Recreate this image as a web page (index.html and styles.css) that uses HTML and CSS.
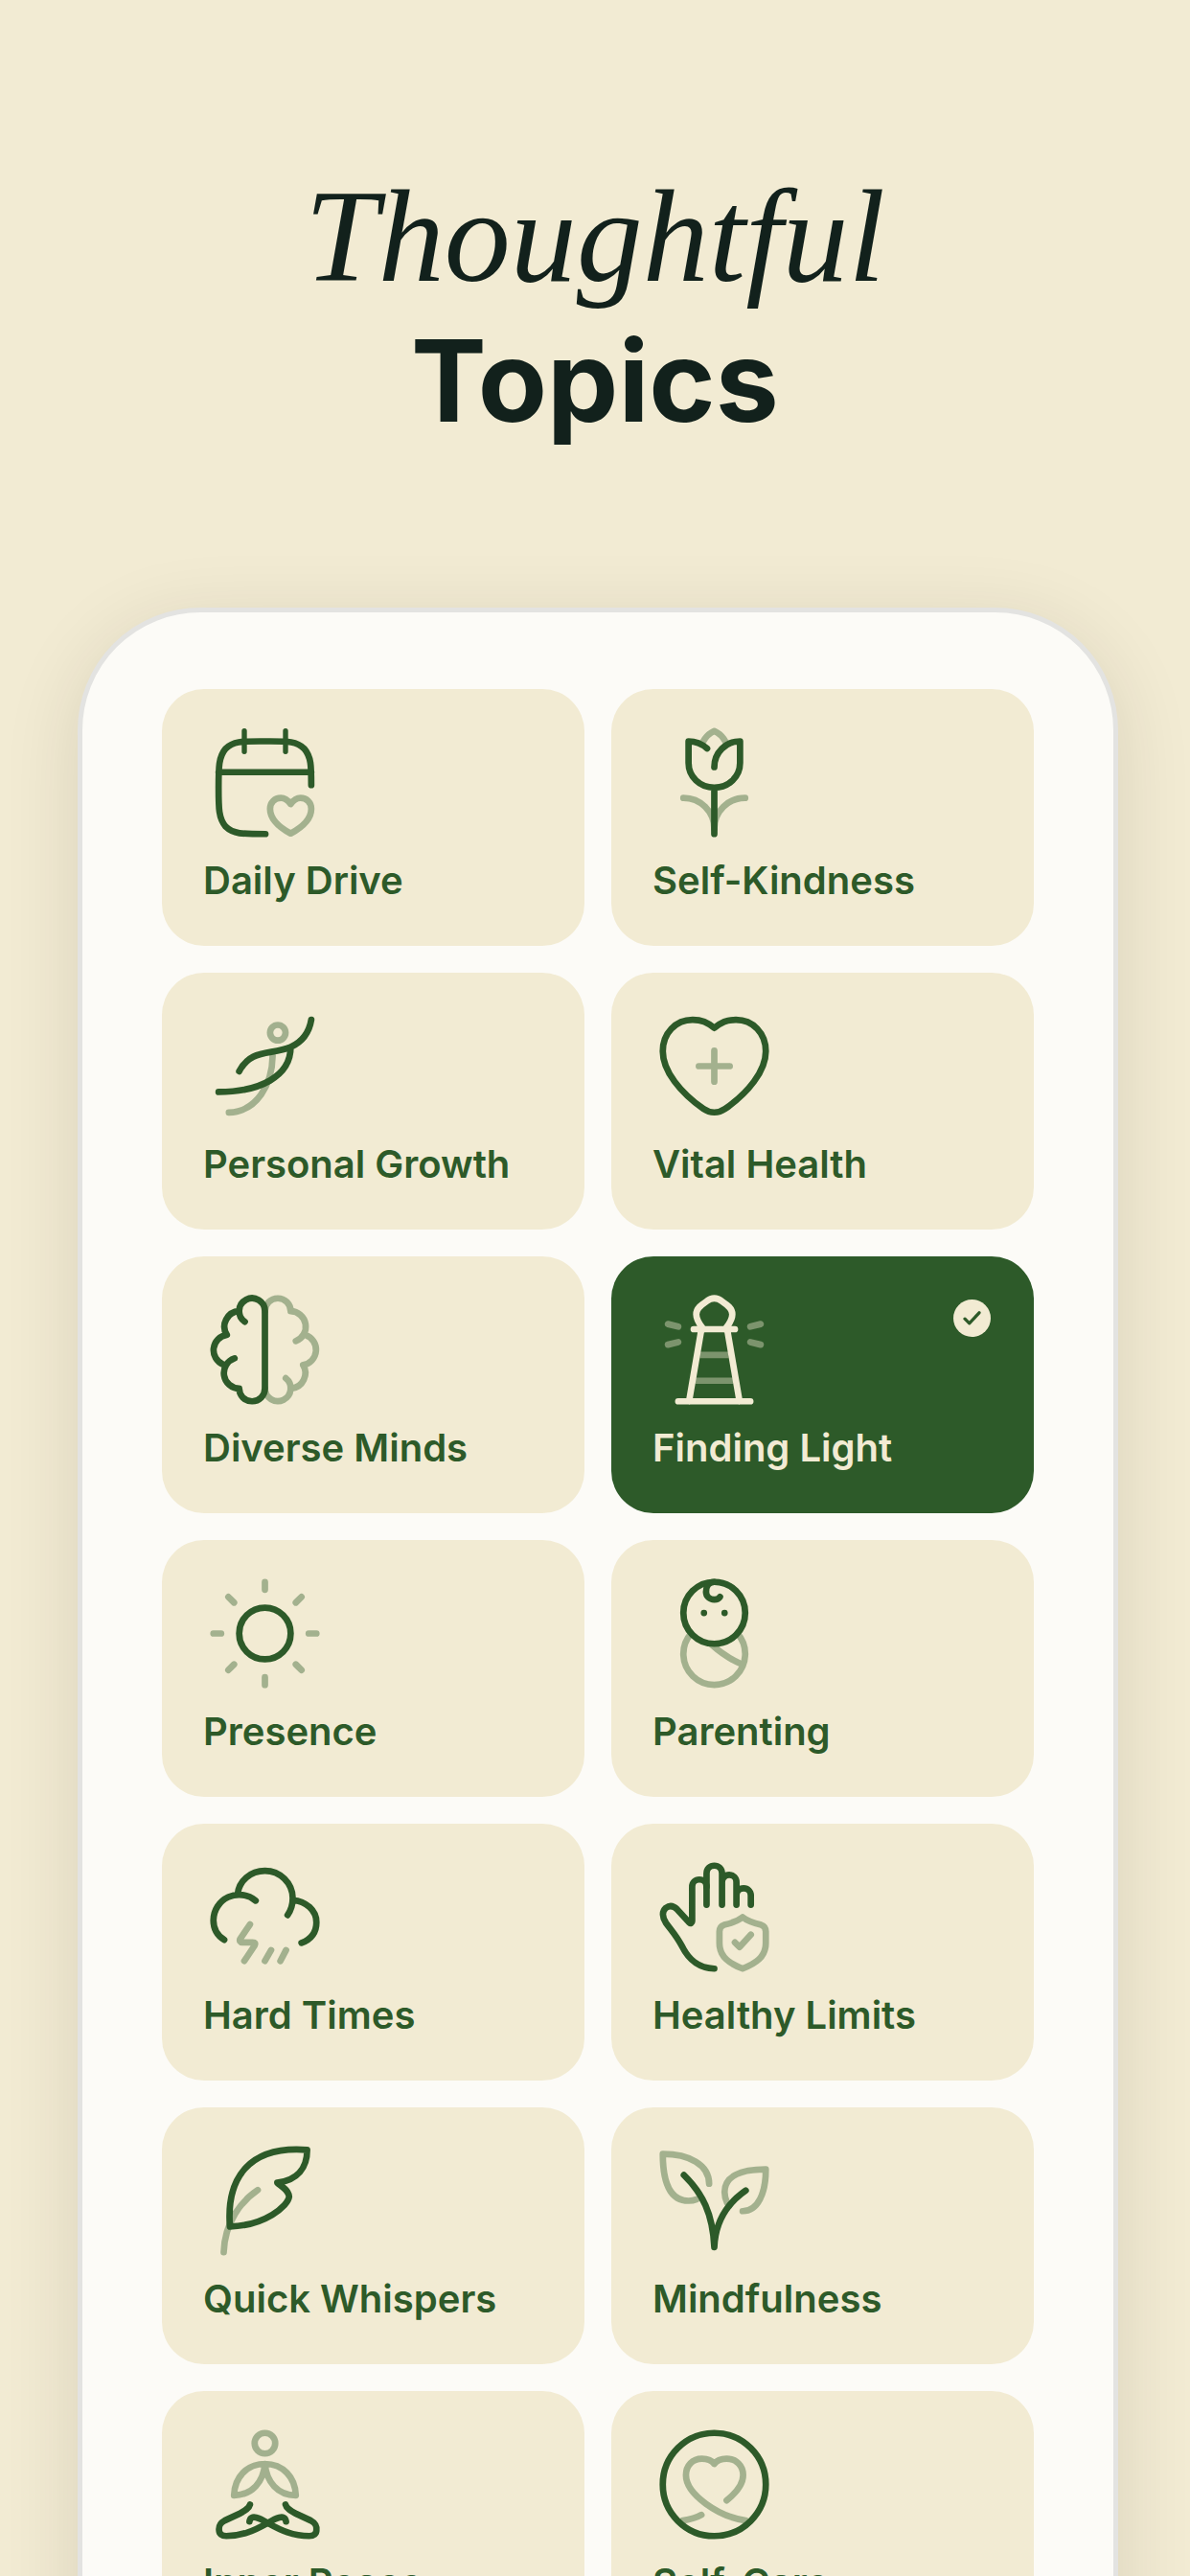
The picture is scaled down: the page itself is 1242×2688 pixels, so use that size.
FILE: index.html
```html
<!DOCTYPE html>
<html lang="en">
<head>
    <meta charset="UTF-8">
    <meta name="viewport" content="width=device-width, initial-scale=1.0">
    <title>Thoughtful Topics</title>
    <link rel="stylesheet" href="styles.css">
</head>
<body>
    <header class="header">
        <h1><em>Thoughtful</em> <strong>Topics</strong></h1>
    </header>

    <main class="panel">
        <button type="button" class="card" aria-pressed="false">
            <svg class="icon" viewBox="0 0 24 24" aria-hidden="true">
                <path d="M12.1 22C7.5 22 5.8 22 4.4 20.6C3 19 3 17 3 13S3 7 4.4 5.4C5.8 4 7.5 4 11 4H13C16.5 4 18.2 4 19.6 5.4C21 7 21 8.8 21 12.5M3 10H21"/>
                <path class="thin" d="M8 2V6M16 2V6"/>
                <path class="soft" d="M17 16.2C16.5 15.5 15.9 15 15.1 15C13.9 15 13 15.9 13 17.1C13 19 14.8 20.7 17 21.9C19.2 20.7 21 19 21 17.1C21 15.9 20.1 15 18.9 15C18.1 15 17.5 15.5 17 16.2Z"/>
            </svg>
            <span class="label">Daily Drive</span>
        </button>

        <button type="button" class="card" aria-pressed="false">
            <svg class="icon" viewBox="0 0 24 24" aria-hidden="true">
                <path class="soft" d="M9.8 4.1C10.3 3.2 11.1 2.4 12 2C12.9 2.4 13.7 3.2 14.2 4.1M6 15C9.3 15 12 17.6 12 21C12 17.6 14.7 15 18 15"/>
                <path d="M10.6 5.4C9.7 4.6 8.5 4 7 4V8.2C7 10.9 9.2 13 12 13S17 10.9 17 8.2V4C14.2 4 12 6.2 12 9M12 13V22"/>
            </svg>
            <span class="label">Self-Kindness</span>
        </button>

        <button type="button" class="card" aria-pressed="false">
            <svg class="icon" viewBox="0 0 24 24" aria-hidden="true">
                <g class="soft">
                    <circle cx="14.5" cy="5.5" r="1.5"/>
                    <path d="M13.5 10C13.4 15.5 10.5 20.8 5 21"/>
                </g>
                <path d="M7 13C9.3 8.6 13 9.9 17 8.3C19.2 7.3 20.6 5.4 21 3M17 8.3C17 14 11 17 3 17"/>
            </svg>
            <span class="label">Personal Growth</span>
        </button>

        <button type="button" class="card" aria-pressed="false">
            <svg class="icon" viewBox="0 0 24 24" aria-hidden="true">
                <path d="M12 4.6C10.6 3.5 9.6 3 7.8 3C4.5 3 2 5.6 2 9.1C2 13 5.5 17.2 9.9 20.3C11.2 21.2 12.8 21.2 14.1 20.3C18.5 17.2 22 13 22 9.1C22 5.6 19.5 3 16.2 3C14.4 3 13.4 3.5 12 4.6Z"/>
                <path class="soft" d="M12 9V15M9 12H15"/>
            </svg>
            <span class="label">Vital Health</span>
        </button>

        <button type="button" class="card" aria-pressed="false">
            <svg class="icon" viewBox="0 0 24 24" aria-hidden="true">
                <path class="soft" d="M12 4.5A2.5 2.5 0 0 1 17 4.5A3 3 0 0 1 18 10.3M19.9 9.15A3 3 0 0 1 19.4 14.95A3 3 0 0 1 17.2 19.5M16.05 17.5A2.5 2.5 0 1 1 12 19.5"/>
                <path d="M8.1 6.55A2.5 2.5 0 1 1 12 4.5V19.5A2.5 2.5 0 0 1 7 19.5A3 3 0 0 1 6.1 13.65M7 4.5A3 3 0 0 0 4.6 9.1A3 3 0 0 0 3.9 14.85"/>
            </svg>
            <span class="label">Diverse Minds</span>
        </button>

        <button type="button" class="card selected" aria-pressed="true">
            <svg class="icon" viewBox="0 0 24 24" aria-hidden="true">
                <g class="soft">
                    <path d="M3 7L5 7.5M3 11L5 10.5M19 7.5L21 7M19 10.5L21 11"/>
                    <path class="flat" d="M9.2 13H14.8M8.3 18H15.7"/>
                </g>
                <path d="M5 22H19M7.1 22L9.5 8M16.9 22L14.5 8M8 8H16M9.9 8C9.3 7.2 8.5 6.3 8.5 5.1C8.5 3.9 9.6 3.2 10.5 2.6C11.5 1.8 12.5 1.8 13.5 2.6C14.4 3.2 15.5 3.9 15.5 5.1C15.5 6.3 14.7 7.2 14.1 8"/>
            </svg>
            <svg class="badge" viewBox="0 0 24 24" aria-hidden="true">
                <circle cx="12" cy="12" r="12"/>
                <path d="M7.4 12.4L10.3 15.3L16.6 8.5"/>
            </svg>
            <span class="label">Finding Light</span>
        </button>

        <button type="button" class="card" aria-pressed="false">
            <svg class="icon" viewBox="0 0 24 24" aria-hidden="true">
                <circle cx="12" cy="12" r="5"/>
                <path class="soft" d="M12 2V3.5M12 20.5V22M2 12H3.5M20.5 12H22M4.9 4.9L6 6M18 18L19.1 19.1M4.9 19.1L6 18M18 6L19.1 4.9"/>
            </svg>
            <span class="label">Presence</span>
        </button>

        <button type="button" class="card" aria-pressed="false">
            <svg class="icon" viewBox="0 0 24 24" aria-hidden="true">
                <path class="soft" d="M7.5 12A6 6 0 1 0 16.5 12M11.5 14.2C13.3 15.8 15.2 17.1 17.4 18"/>
                <circle cx="12" cy="8" r="6"/>
                <path d="M12 2C10.8 2 10.4 3 10.4 3.9C10.4 4.8 11.1 5.4 12 5.4C12.5 5.4 12.9 5.2 13.1 4.9M10 8V8.01M14 8V8.01"/>
            </svg>
            <span class="label">Parenting</span>
        </button>

        <button type="button" class="card" aria-pressed="false">
            <svg class="icon" viewBox="0 0 24 24" aria-hidden="true">
                <path d="M4.1 16.4C2.8 15.6 2 14.2 2 12.6A5 5 0 0 1 10.2 8.8M6.7 7.6C6.9 5 9.2 3 12 3A5.4 5.4 0 0 1 17.4 8.3C17.4 9.6 17.1 10.6 16.4 11.6M17.4 8.7C20 8.9 22 10.7 22 13C22 14.9 20.9 16.3 19.1 17"/>
                <path class="soft" d="M9.1 13.4L7.2 16.2C7 16.6 7.2 16.9 7.6 16.9H9.6C10.1 16.9 10.2 17.1 10 17.5L8 20.5M13.2 18.4L12 20.5M16.1 18.4L15 20.5"/>
            </svg>
            <span class="label">Hard Times</span>
        </button>

        <button type="button" class="card" aria-pressed="false">
            <svg class="icon" viewBox="0 0 24 24" aria-hidden="true">
                <path d="M12 22C8.8 21.9 7 20.2 5.7 17.6C4.8 15.8 3.7 14.6 2.6 13.1C1.9 12 1.8 10.9 2.6 10.2C3.4 9.6 4.2 9.9 4.8 10.5L7.2 13.1C7.4 13.3 7.7 13.1 7.7 12.8V6.1C7.7 5.3 8.3 4.7 9.1 4.7S10.5 5.3 10.5 6.1"/>
                <path d="M10.5 9.6V3.5C10.5 2.6 11.2 2 12 2S13.5 2.6 13.5 3.5V9.6M13.5 5.2C13.5 4.4 14.1 3.8 14.9 3.8S16.3 4.4 16.3 5.2V9.6M16.3 7.8C16.3 7 16.9 6.4 17.7 6.4S19.1 7 19.1 7.8V9.6"/>
                <path class="soft" d="M17.5 12C16.4 12.9 15.2 13.2 13.9 13.5C13.3 13.7 13 14.1 13 14.8V17C13 19.8 15 21 17.5 22C20 21 22 19.8 22 17V14.8C22 14.1 21.7 13.7 21.1 13.5C19.8 13.2 18.6 12.9 17.5 12ZM16 16.9L16.9 17.8L19.1 15.4"/>
            </svg>
            <span class="label">Healthy Limits</span>
        </button>

        <button type="button" class="card" aria-pressed="false">
            <svg class="icon" viewBox="0 0 24 24" aria-hidden="true">
                <path class="soft" d="M10.6 9.9C7.5 12 4.2 16 4 22"/>
                <path d="M5.2 17C4.5 8 8.5 1.2 20.2 2.1C20.2 5.5 18.4 8 14.4 8.5C15.2 9.2 16.6 9.9 16.7 11.2C16.5 13 12 16.8 5.2 17Z"/>
            </svg>
            <span class="label">Quick Whispers</span>
        </button>

        <button type="button" class="card" aria-pressed="false">
            <svg class="icon" viewBox="0 0 24 24" aria-hidden="true">
                <path class="soft" d="M11 8.7C11 4.9 7 2.9 2 2.9C2 8.5 3.5 12 7 12C7.6 12 8.1 11.9 8.6 11.7M17.5 14C20.5 14 22 10.5 22 5.9C17 5.9 14 7.3 14 10.3C14 11 14.2 11.8 14.5 12.4"/>
                <path d="M6.1 7C9.7 10.5 11.7 14.5 12 21C12.2 16 14.5 12.5 18.1 10"/>
            </svg>
            <span class="label">Mindfulness</span>
        </button>

        <button type="button" class="card" aria-pressed="false">
            <svg class="icon" viewBox="0 0 24 24" aria-hidden="true">
                <g class="soft">
                    <circle cx="12" cy="4" r="2"/>
                    <path d="M12 8C8.5 8 6.1 10.6 6 14.1C9.5 14.1 11.7 11.5 12 8C12.3 11.5 14.5 14.1 18 14.1C17.9 10.6 15.5 8 12 8Z"/>
                </g>
                <path d="M9.1 15.9C8.9 16.7 8.1 17.1 7 17.7L4.2 19C3.3 19.5 3 20 3.1 20.9C3.1 21.6 3.6 22 4.5 22C7.6 22 10 20.9 12.5 19.5C14 18.6 15.9 17.6 16.1 19.2"/>
                <path d="M16 15.9C16.2 16.7 17 17.1 18.1 17.7L20.9 19C21.8 19.5 22.1 20 22 20.9C22 21.6 21.5 22 20.6 22C17.5 22 15.1 20.9 12.6 19.5C11.1 18.6 9.2 17.6 9 19.2"/>
            </svg>
            <span class="label">Inner Peace</span>
        </button>

        <button type="button" class="card" aria-pressed="false">
            <svg class="icon" viewBox="0 0 24 24" aria-hidden="true">
                <path class="soft" d="M14.4 15.1C16.4 13.5 17.6 12 17.6 10.2C17.6 8.3 16.2 7 14.4 7C13.3 7 12.5 7.3 12 8C11.5 7.3 10.7 7 9.6 7C7.8 7 6.5 8.3 6.5 10.2C6.5 14 13 18.3 18.1 19M9.5 17.9C8.5 18.5 7.3 18.8 5.9 19"/>
                <circle cx="12" cy="12" r="10"/>
            </svg>
            <span class="label">Self-Care</span>
        </button>
    </main>

    <script>
        // tap a topic to select it
        document.querySelectorAll('.card').forEach(card => {
            card.addEventListener('click', () => {
                const on = card.classList.toggle('selected');
                card.setAttribute('aria-pressed', on);
            });
        });
    </script>
</body>
</html>
```
FILE: styles.css
```css
* {
    margin: 0;
    padding: 0;
    box-sizing: border-box;
}

body {
    font-family: Inter, sans-serif;
    background-color: #f2ebd3;
    color: #12211c;
}

.header {
    padding: 172px 0 162px;
    text-align: center;
}

.header h1 {
    font-size: 118px;
    font-weight: 700;
    line-height: 150px;
}

.header em,
.header strong {
    display: block;
    font-weight: inherit;
}

.header em {
    font-family: "Liberation Serif", serif;
    font-size: 138px;
    font-weight: 400;
}

.panel {
    display: grid;
    grid-template-columns: 1fr 1fr;
    gap: 28px;
    margin: 0 75px 0 81px;
    padding: 80px 83px;
    background-color: #fcfbf7;
    border: 5px solid #e3e3e1;
    border-radius: 128px;
    box-shadow: 0 16px 80px rgba(40, 30, 0, 0.12);
}

.card {
    position: relative;
    display: flex;
    flex-direction: column;
    align-items: flex-start;
    gap: 14px;
    height: 268px;
    padding: 33px 43px;
    font-family: inherit;
    text-align: left;
    background-color: #f2ebd3;
    color: #2d5a29;
    border: none;
    border-radius: 44px;
    cursor: pointer;
}

.card.selected {
    background-color: #2d5a29;
    color: #f2ebd3;
}

.icon {
    width: 129px;
    height: 129px;
    fill: none;
    stroke: currentColor;
    stroke-width: 1.25;
    stroke-linecap: round;
    stroke-linejoin: round;
}

.icon .soft {
    opacity: 0.4;
}

.icon .thin {
    stroke-width: 1;
}

.icon .flat {
    stroke-linecap: butt;
}

.badge {
    position: absolute;
    top: 45px;
    right: 45px;
    width: 39px;
    height: 39px;
    fill: currentColor;
}

.badge path {
    fill: none;
    stroke: #2d5a29;
    stroke-width: 2;
    stroke-linecap: round;
    stroke-linejoin: round;
}

.label {
    font-size: 40px;
    font-weight: 600;
    line-height: 48px;
    white-space: nowrap;
}
```
